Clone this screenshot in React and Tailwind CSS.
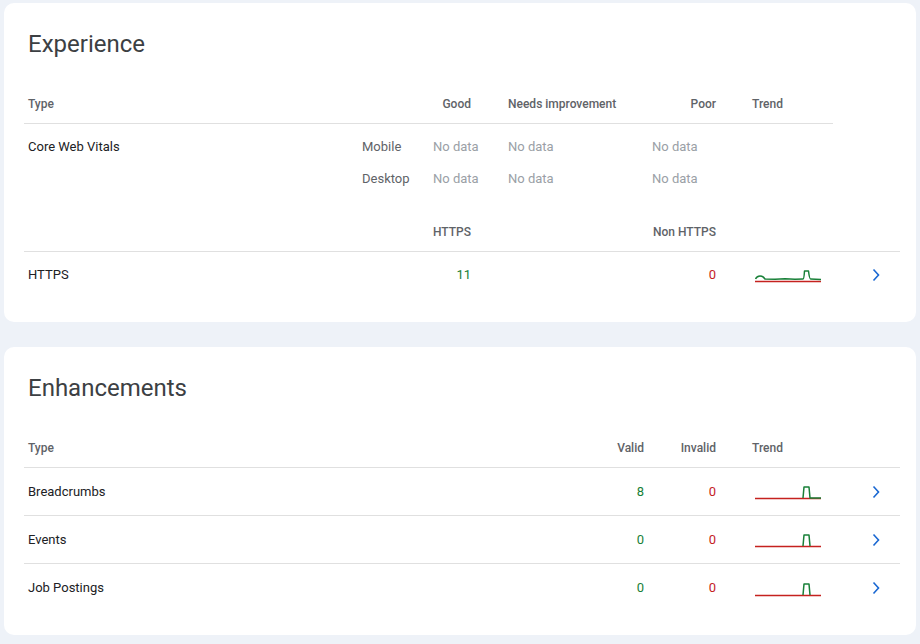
export default function App() {
  return (
    <div className="w-[920px] h-[644px] bg-[#eef2f8] pt-[3px] px-1 font-['Roboto',sans-serif] text-[#202124]">
      <ExperienceCard />
      <EnhancementsCard />
    </div>
  )
}

function Spark({ variant }) {
  // green line over a red baseline, 66x16
  let green
  if (variant === "https") {
    green = "M0.5 11 Q2 8 5 8 Q8 8 10 11 L20 11.3 L30 10.8 L40 11.2 L48 11 Q49 11 49.5 3 L53.5 3 Q54.5 11 55.5 11 L66 11.5"
  } else if (variant === "tail") {
    green = "M48 13 L49 2 L54 2 L55 13 L66 13"
  } else {
    green = "M48 13 L49 2 L54 2 L55 13"
  }
  return (
    <svg width="66" height="16" viewBox="0 0 66 16" fill="none">
      <path d="M0 13.5 H66" stroke="#c5221f" strokeWidth="1.4" />
      <path d={green} stroke="#188038" strokeWidth="1.5" strokeLinejoin="round" />
    </svg>
  )
}

function Chevron() {
  return (
    <svg width="8" height="14" viewBox="0 0 8 14" fill="none">
      <path d="M1.5 1.5 L6.5 7 L1.5 12.5" stroke="#1967d2" strokeWidth="1.6" />
    </svg>
  )
}

function ExperienceCard() {
  const rows = [
    { type: "Core Web Vitals", device: "Mobile" },
    { type: "", device: "Desktop" },
  ]
  return (
    <div className="bg-white rounded-[10px] pl-5 pr-4 pt-[27px] pb-[24px]">
      {/* Title */}
      <h2 className="pl-1 text-[24px] leading-[28px] font-normal text-[#3c4043]">Experience</h2>

      {/* Core Web Vitals table */}
      <div className="w-[809px] mt-[26px]">
        <div className="grid grid-cols-[334px_71px_79px_144px_68px_113px] h-10 items-center border-b border-[#e0e0e0] text-xs font-medium text-[#5f6368]">
          <div className="pl-1">Type</div>
          <div></div>
          <div className="text-right pr-[37px]">Good</div>
          <div>Needs improvement</div>
          <div className="text-right pr-1">Poor</div>
          <div className="pl-8">Trend</div>
        </div>
        <div className="pt-[7px]">
          {rows.map((r) => (
            <div
              key={r.device}
              className="grid grid-cols-[334px_71px_79px_144px_68px_113px] h-8 items-center text-[13px]"
            >
              <div className="pl-1 text-[#202124]">{r.type}</div>
              <div className="pl-1 text-[#5f6368]">{r.device}</div>
              <div className="pl-1 text-[#9aa0a6]">No data</div>
              <div className="text-[#9aa0a6]">No data</div>
              <div className="text-[#9aa0a6]">No data</div>
              <div></div>
            </div>
          ))}
        </div>
      </div>

      {/* HTTPS table */}
      <div className="mt-[17px]">
        <div className="grid grid-cols-[405px_46px_177px_68px_132px_48px] h-10 items-center border-b border-[#e0e0e0] text-xs font-medium text-[#5f6368]">
          <div></div>
          <div className="text-right pr-1">HTTPS</div>
          <div></div>
          <div className="text-right pr-1">Non HTTPS</div>
          <div></div>
          <div></div>
        </div>
        <div className="grid grid-cols-[405px_46px_177px_68px_132px_48px] h-[46px] items-center text-[13px]">
          <div className="pl-1">HTTPS</div>
          <div className="text-right pr-1 text-[#188038]">11</div>
          <div></div>
          <div className="text-right pr-1 text-[#c5221f]">0</div>
          <div className="pl-[35px] flex items-center pt-[1px]">
            <Spark variant="https" />
          </div>
          <div className="flex justify-center">
            <Chevron />
          </div>
        </div>
      </div>
    </div>
  )
}

function EnhancementsCard() {
  const rows = [
    { type: "Breadcrumbs", valid: 8, invalid: 0, spark: "tail" },
    { type: "Events", valid: 0, invalid: 0, spark: "plain" },
    { type: "Job Postings", valid: 0, invalid: 0, spark: "plain" },
  ]
  return (
    <div className="bg-white rounded-[10px] pl-5 pr-4 pt-[27px] pb-[23px] mt-[25px]">
      <h2 className="pl-1 text-[24px] leading-[28px] font-normal text-[#3c4043]">Enhancements</h2>

      <div className="mt-[26px]">
        <div className="grid grid-cols-[552px_72px_72px_132px_48px] h-10 items-center border-b border-[#e0e0e0] text-xs font-medium text-[#5f6368]">
          <div className="pl-1">Type</div>
          <div className="text-right pr-1">Valid</div>
          <div className="text-right pr-1">Invalid</div>
          <div className="pl-8">Trend</div>
          <div></div>
        </div>
        {rows.map((r, i) => (
          <div
            key={r.type}
            className={`grid grid-cols-[552px_72px_72px_132px_48px] h-12 items-center text-[13px] ${
              i < rows.length - 1 ? "border-b border-[#e0e0e0]" : ""
            }`}
          >
            <div className="pl-1">{r.type}</div>
            <div className="text-right pr-1 text-[#188038]">{r.valid}</div>
            <div className="text-right pr-1 text-[#c5221f]">{r.invalid}</div>
            <div className="pl-[35px] flex items-center pt-[3px]">
              <Spark variant={r.spark} />
            </div>
            <div className="flex justify-center">
              <Chevron />
            </div>
          </div>
        ))}
      </div>
    </div>
  )
}
